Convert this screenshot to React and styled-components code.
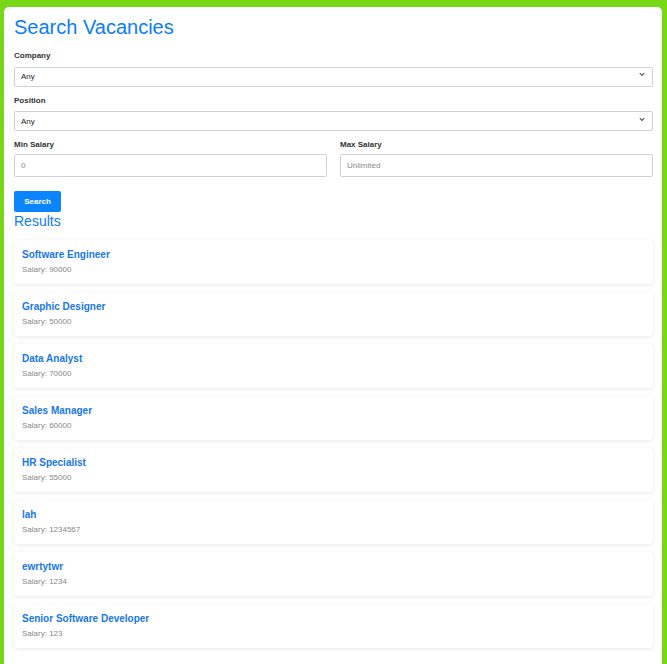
import React, { useState } from 'react';
import styled, { createGlobalStyle } from 'styled-components';

const GlobalStyle = createGlobalStyle`
    html, body {
        margin: 0;
        padding: 0;
        background: #78d817;
        font-family: "Liberation Sans", Arial, sans-serif;
    }
    * { box-sizing: border-box; }
`

const Page = styled.div`
    padding: 7px 5px 0 4px;
    min-height: 664px;
`

const Container = styled.div`
    background: #fff;
    border-radius: 5px 5px 0 0;
    padding: 9px 9px 16px 10px;
    min-height: 657px;
`

const Title = styled.h1`
    margin: 0 0 12px;
    font-size: 20px;
    font-weight: 400;
    line-height: 23px;
    color: #0a7dfa;
`

const Field = styled.div`
    display: flex;
    flex-direction: column;
    margin-bottom: 9px;
`

const Label = styled.label`
    font-size: 8px;
    font-weight: 700;
    color: #333;
    line-height: 10px;
    margin-bottom: 4px;
`

const SelectWrap = styled.div`
    position: relative;

    svg {
        position: absolute;
        right: 8px;
        top: 7px;
        pointer-events: none;
    }
`

const Select = styled.select`
    appearance: none;
    width: 100%;
    height: 20px;
    padding: 0 6px;
    border: 1px solid #cfd3d8;
    border-radius: 2px;
    background: #fff;
    font-family: inherit;
    font-size: 8px;
    color: #222;
    outline: none;
`

const Row = styled.div`
    display: grid;
    grid-template-columns: 1fr 1fr;
    gap: 13px;
    margin-top: 2px;
`

const Input = styled.input`
    width: 100%;
    height: 23px;
    padding: 0 6px;
    border: 1px solid #cfd3d8;
    border-radius: 2px;
    font-family: inherit;
    font-size: 8px;
    color: ${props => props.muted ? '#888' : '#333'};
    outline: none;

    &::placeholder {
        color: #888;
    }
`

const Button = styled.button`
    display: block;
    margin-top: 5px;
    width: 47px;
    height: 21px;
    border: none;
    border-radius: 2px;
    background: #0a84ff;
    color: #fff;
    font-family: inherit;
    font-size: 8px;
    font-weight: 700;
    cursor: pointer;
`

const SubTitle = styled.h2`
    margin: 1px 0 11px;
    font-size: 14px;
    font-weight: 400;
    line-height: 16px;
    color: #0a7dfa;
`

const List = styled.div`
    display: flex;
    flex-direction: column;
    gap: 8px;
`

const Card = styled.div`
    height: 44px;
    padding: 8px 8px 0 8px;
    border-radius: 4px;
    background: #fff;
    box-shadow: 0 1px 4px rgba(0, 0, 0, 0.09);
`

const JobTitle = styled.div`
    font-size: 10px;
    font-weight: 700;
    line-height: 13px;
    color: #1877e8;
    margin-bottom: 3px;
`

const Salary = styled.div`
    font-size: 8px;
    line-height: 11px;
    color: #888;
`

const Chevron = () => (
    <svg width="6" height="5" viewBox="0 0 6 5">
        <path d="M0.8 1.2 L3 3.4 L5.2 1.2" fill="none" stroke="#555" strokeWidth="1.2" />
    </svg>
)

const vacancies = [
    { title: 'Software Engineer', salary: 90000 },
    { title: 'Graphic Designer', salary: 50000 },
    { title: 'Data Analyst', salary: 70000 },
    { title: 'Sales Manager', salary: 60000 },
    { title: 'HR Specialist', salary: 55000 },
    { title: 'lah', salary: 1234567 },
    { title: 'ewrtytwr', salary: 1234 },
    { title: 'Senior Software Developer', salary: 123 },
]

const App = () => {
    const [min, setMin] = useState('0')
    const [max, setMax] = useState('')

    return (
        <>
            <GlobalStyle />
            <Page>
                <Container>
                    <Title>Search Vacancies</Title>
                    <Field>
                        <Label>Company</Label>
                        <SelectWrap>
                            <Select defaultValue="any">
                                <option value="any">Any</option>
                            </Select>
                            <Chevron />
                        </SelectWrap>
                    </Field>
                    <Field>
                        <Label>Position</Label>
                        <SelectWrap>
                            <Select defaultValue="any">
                                <option value="any">Any</option>
                            </Select>
                            <Chevron />
                        </SelectWrap>
                    </Field>
                    <Row>
                        <Field>
                            <Label>Min Salary</Label>
                            <Input muted value={min} onChange={e => setMin(e.target.value)} />
                        </Field>
                        <Field>
                            <Label>Max Salary</Label>
                            <Input placeholder="Unlimited" value={max} onChange={e => setMax(e.target.value)} />
                        </Field>
                    </Row>
                    <Button>Search</Button>
                    <SubTitle>Results</SubTitle>
                    <List>
                        {vacancies.map(v => (
                            <Card key={v.title}>
                                <JobTitle>{v.title}</JobTitle>
                                <Salary>Salary: {v.salary}</Salary>
                            </Card>
                        ))}
                    </List>
                </Container>
            </Page>
        </>
    )
}

export default App;
